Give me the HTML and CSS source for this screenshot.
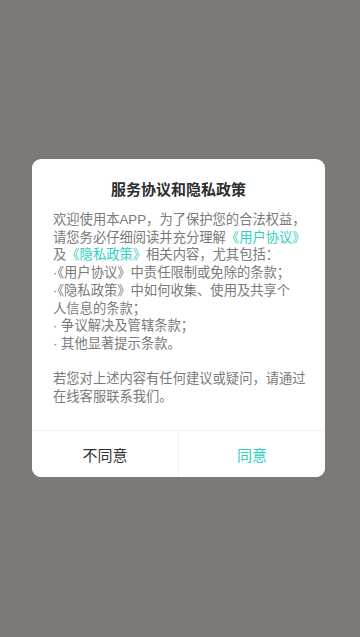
FILE: index.html
```html
<!DOCTYPE html>
<html lang="zh-CN">
<head>
<meta charset="utf-8">
<meta name="viewport" content="width=device-width, initial-scale=1">
<title>服务协议和隐私政策</title>
<link rel="stylesheet" href="styles.css">
</head>
<body>
<div class="dialog">
  <h1 class="title">服务协议和隐私政策</h1>
  <div class="content">
    <p class="line">欢迎使用本APP，为了保护您的合法权益，</p>
    <p class="line">请您务必仔细阅读并充分理解<span class="link">《用户协议》</span></p>
    <p class="line">及<span class="link">《隐私政策》</span>相关内容，尤其包括：</p>
    <p class="line">·《用户协议》中责任限制或免除的条款；</p>
    <p class="line">·《隐私政策》中如何收集、使用及共享个</p>
    <p class="line">人信息的条款；</p>
    <p class="line">· 争议解决及管辖条款；</p>
    <p class="line">· 其他显著提示条款。</p>
    <p class="line blank">&nbsp;</p>
    <p class="line">若您对上述内容有任何建议或疑问，请通过</p>
    <p class="line">在线客服联系我们。</p>
  </div>
  <div class="actions">
    <button class="btn btn-cancel" type="button">不同意</button>
    <button class="btn btn-ok" type="button">同意</button>
  </div>
</div>
</body>
</html>
```

FILE: styles.css
```css
html, body {
  margin: 0;
  padding: 0;
}
body {
  width: 360px;
  height: 637px;
  background: #7c7977;
  font-family: "Liberation Sans", "Noto Sans CJK SC", sans-serif;
  padding: 159px 0 0 32px;
  box-sizing: border-box;
  overflow: hidden;
}
.dialog {
  width: 293px;
  height: 318px;
  background: #ffffff;
  border-radius: 9px;
  overflow: hidden;
  display: flex;
  flex-direction: column;
  box-sizing: border-box;
}
.title {
  margin: 0;
  padding-top: 21px;
  font-size: 15px;
  line-height: 20px;
  font-weight: 700;
  color: #2e2e2e;
  text-align: center;
}
.content {
  padding: 11px 21px 0 21px;
  flex: 1;
}
.line {
  margin: 0;
  font-size: 13.3px;
  line-height: 17.7px;
  color: #7a7a7a;
  white-space: nowrap;
}
.link {
  color: #2dd0bf;
}
.actions {
  display: flex;
  height: 46px;
  border-top: 1px solid #f2f2f2;
}
.btn {
  flex: 1;
  border: 0;
  background: #ffffff;
  font-family: inherit;
  font-size: 15px;
  padding: 0;
  margin: 0;
}
.btn-cancel {
  color: #333333;
  border-right: 1px solid #f2f2f2;
}
.btn-ok {
  color: #2dd0bf;
}
```
